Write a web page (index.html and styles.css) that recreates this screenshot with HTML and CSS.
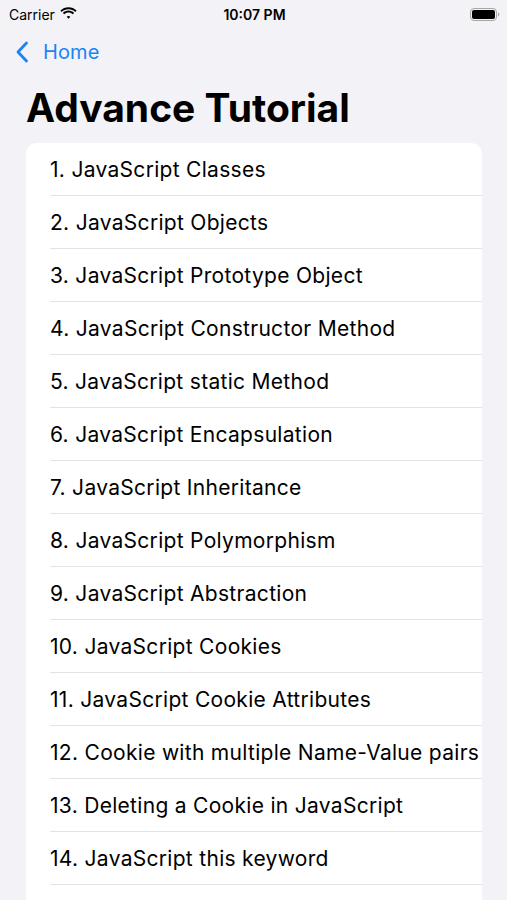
FILE: index.html
```html
<!DOCTYPE html>
<html>
<head>
<meta charset="utf-8">
<link rel="stylesheet" href="styles.css">
</head>
<body>
<div class="screen">
  <div class="status">
    <div class="status-left">Carrier
      <svg class="wifi" width="17" height="12" viewBox="0 0 17 12"><path d="M8.5 2.2c2.6 0 5 1 6.8 2.7l1.3-1.4C14.4 1.4 11.6.2 8.5.2S2.6 1.4.4 3.5l1.3 1.4C3.5 3.2 5.9 2.2 8.5 2.2z M8.5 5.6c1.6 0 3.1.6 4.3 1.7l1.3-1.4c-1.5-1.4-3.5-2.3-5.6-2.3s-4.1.9-5.6 2.3l1.3 1.4c1.2-1.1 2.7-1.7 4.3-1.7z M8.5 9c.7 0 1.3.3 1.8.7L8.5 11.7 6.7 9.7C7.2 9.3 7.8 9 8.5 9z" fill="#000"/></svg>
    </div>
    <div class="status-time">10:07 PM</div>
    <div class="status-right">
      <svg width="30" height="13" viewBox="0 0 30 13"><rect x="0.5" y="0.5" width="26" height="12" rx="3.5" fill="none" stroke="#a6a6a6"/><rect x="2" y="2" width="23" height="9" rx="2" fill="#000"/><path d="M28 4.5v4c.8-.3 1.3-1.1 1.3-2s-.5-1.7-1.3-2z" fill="#a6a6a6"/></svg>
    </div>
  </div>
  <div class="nav">
    <svg class="chev" width="14" height="22" viewBox="0 0 14 22"><path d="M11.5 2L3 11l8.5 9" fill="none" stroke="#1a84f5" stroke-width="2.8" stroke-linecap="round" stroke-linejoin="round"/></svg>
    <span class="back">Home</span>
  </div>
  <h1 class="title">Advance Tutorial</h1>
  <ul class="list">
    <li>1. JavaScript Classes</li>
    <li>2. JavaScript Objects</li>
    <li>3. JavaScript Prototype Object</li>
    <li>4. JavaScript Constructor Method</li>
    <li>5. JavaScript static Method</li>
    <li>6. JavaScript Encapsulation</li>
    <li>7. JavaScript Inheritance</li>
    <li>8. JavaScript Polymorphism</li>
    <li>9. JavaScript Abstraction</li>
    <li>10. JavaScript Cookies</li>
    <li>11. JavaScript Cookie Attributes</li>
    <li>12. Cookie with multiple Name-Value pairs</li>
    <li>13. Deleting a Cookie in JavaScript</li>
    <li>14. JavaScript this keyword</li>
    <li></li>
  </ul>
</div>
</body>
</html>
```
FILE: styles.css
```css
* { box-sizing: border-box; }
html, body { margin: 0; padding: 0; }
body {
  background: #f2f2f7;
  font-family: Inter, "Noto Sans", sans-serif;
  color: #000;
  overflow: hidden;
}
.screen { width: 507px; height: 900px; overflow: hidden; }
.status {
  height: 28px;
  display: flex;
  align-items: center;
  justify-content: space-between;
  padding: 0 7px 0 9px;
  font-size: 14px;
}
.status-left { display: flex; align-items: center; gap: 5px; width: 120px; }
.wifi { margin-top: -2px; }
.status-time { font-weight: 600; font-size: 14px; }
.status-right { width: 120px; display: flex; justify-content: flex-end; }
.nav {
  height: 48px;
  display: flex;
  align-items: center;
  padding-left: 15px;
  gap: 14px;
}
.back { color: #1a84f5; font-size: 20px; letter-spacing: 0.1px; }
.title {
  margin: 0;
  padding: 10px 0 0 26px;
  height: 60px;
  font-size: 39px;
  font-weight: 700;
  letter-spacing: 0;
  line-height: 44px;
}
.list {
  list-style: none;
  margin: 7px 25px 0 26px;
  padding: 0;
  background: #fff;
  border-radius: 11px;
  height: 800px;
}
.list li {
  height: 53px;
  margin-left: 24px;
  border-bottom: 1px solid #e3e3e6;
  display: flex;
  align-items: center;
  font-size: 21px;
  white-space: nowrap;
  overflow: hidden;
  letter-spacing: 0.3px;
}
```
